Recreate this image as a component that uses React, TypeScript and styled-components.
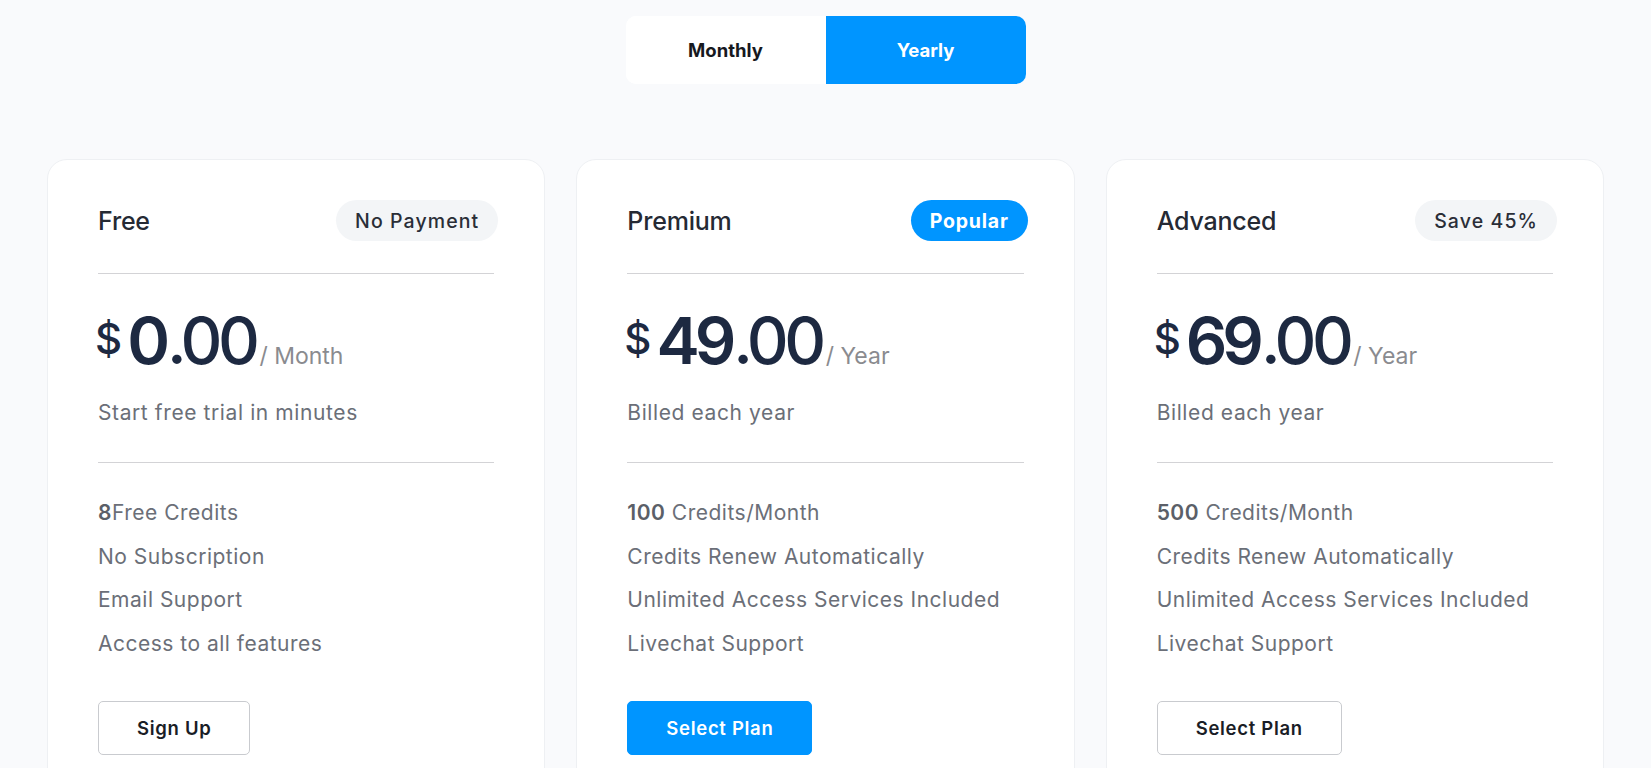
import * as React from 'react'
import styled, { createGlobalStyle } from 'styled-components'

const GlobalStyle = createGlobalStyle`
	html, body {
		margin: 0;
		padding: 0;
		background: #f9fafc;
		font-family: Inter, "Noto Sans", "Liberation Sans", sans-serif;
		-webkit-font-smoothing: antialiased;
	}
	* {
		box-sizing: border-box;
	}
`

type Plan = {
	name: string
	badge: string
	badgeActive?: boolean
	whole: string
	cents: string
	period: string
	note: string
	features: { strong?: string; text: string }[]
	action: string
	primary?: boolean
}

const plans: Plan[] = [
	{
		name: 'Free',
		badge: 'No Payment',
		whole: '0',
		cents: '.00',
		period: '/ Month',
		note: 'Start free trial in minutes',
		features: [
			{ strong: '8', text: 'Free Credits' },
			{ text: 'No Subscription' },
			{ text: 'Email Support' },
			{ text: 'Access to all features' },
		],
		action: 'Sign Up',
	},
	{
		name: 'Premium',
		badge: 'Popular',
		badgeActive: true,
		whole: '49',
		cents: '.00',
		period: '/ Year',
		note: 'Billed each year',
		features: [
			{ strong: '100', text: ' Credits/Month' },
			{ text: 'Credits Renew Automatically' },
			{ text: 'Unlimited Access Services Included' },
			{ text: 'Livechat Support' },
		],
		action: 'Select Plan',
		primary: true,
	},
	{
		name: 'Advanced',
		badge: 'Save 45%',
		whole: '69',
		cents: '.00',
		period: '/ Year',
		note: 'Billed each year',
		features: [
			{ strong: '500', text: ' Credits/Month' },
			{ text: 'Credits Renew Automatically' },
			{ text: 'Unlimited Access Services Included' },
			{ text: 'Livechat Support' },
		],
		action: 'Select Plan',
	},
]

export default function App() {
	const [yearly, setYearly] = React.useState(true)

	return (
		<Page>
			<GlobalStyle />
			<Toggle>
				<ToggleButton active={!yearly} onClick={() => setYearly(false)}>
					Monthly
				</ToggleButton>
				<ToggleButton active={yearly} onClick={() => setYearly(true)}>
					Yearly
				</ToggleButton>
			</Toggle>
			<Cards>
				{plans.map(plan => (
					<Card key={plan.name}>
						<CardHead>
							<PlanName>{plan.name}</PlanName>
							<Badge active={plan.badgeActive}>{plan.badge}</Badge>
						</CardHead>
						<Rule />
						<PriceRow>
							<Currency>$</Currency>
							<Whole>{plan.whole}</Whole>
							<Cents>{plan.cents}</Cents>
							<Period>{plan.period}</Period>
						</PriceRow>
						<Note>{plan.note}</Note>
						<Rule />
						<Features>
							{plan.features.map((f, i) => (
								<Feature key={i}>
									{f.strong && <b>{f.strong}</b>}
									{f.text}
								</Feature>
							))}
						</Features>
						<Action primary={plan.primary}>{plan.action}</Action>
					</Card>
				))}
			</Cards>
		</Page>
	)
}

const Page = styled.div`
	padding: 16px 47px 0;
	display: flex;
	flex-direction: column;
	align-items: center;
	min-height: 768px;
	overflow: hidden;
`

const Toggle = styled.div`
	display: flex;
	width: 400px;
	height: 68px;
	border-radius: 10px;
	background: #fff;
	overflow: hidden;
`

const ToggleButton = styled.button<{ active?: boolean }>`
	flex: 1;
	border: 0;
	margin: 0;
	font-family: inherit;
	font-size: 18.5px;
	font-weight: 700;
	letter-spacing: 0;
	cursor: pointer;
	background: ${p => (p.active ? '#0095ff' : '#fff')};
	color: ${p => (p.active ? '#fff' : '#16181e')};
`

const Cards = styled.div`
	margin-top: 75px;
	width: 100%;
	display: grid;
	grid-template-columns: repeat(3, 1fr);
	gap: 31px;
`

const Card = styled.div`
	background: #fff;
	border: 1px solid #eef0f3;
	border-radius: 20px;
	padding: 40px 46px 60px 50px;
	display: flex;
	flex-direction: column;
	align-items: flex-start;
`

const CardHead = styled.div`
	width: 100%;
	height: 41px;
	display: flex;
	align-items: center;
	justify-content: space-between;
`

const PlanName = styled.span`
	font-size: 25px;
	font-weight: 500;
	color: #252a34;
	letter-spacing: -0.2px;
`

const Badge = styled.span<{ active?: boolean }>`
	height: 41px;
	display: inline-flex;
	align-items: center;
	padding: 0 19px;
	border-radius: 21px;
	font-size: 19.5px;
	font-weight: ${p => (p.active ? 700 : 500)};
	letter-spacing: ${p => (p.active ? '0.8px' : '1.1px')};
	background: ${p => (p.active ? '#0095ff' : '#f3f5f7')};
	color: ${p => (p.active ? '#fff' : '#2a2e37')};
`

const Rule = styled.hr`
	align-self: stretch;
	margin: 32px 4px 0 0;
	border: 0;
	border-top: 1px solid #d3d3d6;
	& ~ & {
		margin-top: 34px;
	}
`

const PriceRow = styled.div`
	margin-top: 34px;
	display: flex;
	align-items: baseline;
	line-height: 1;
	color: #1d2941;
`

const Currency = styled.span`
	align-self: flex-start;
	margin: 10px 5px 0 -3px;
	font-size: 42px;
	font-weight: 500;
`

const Whole = styled.span`
	font-size: 65px;
	font-weight: 600;
	letter-spacing: -5px;
	margin-right: 2px;
`

const Cents = styled.span`
	font-size: 65px;
	font-weight: 500;
	letter-spacing: -4.5px;
`

const Period = styled.span`
	margin-left: 4px;
	font-size: 23px;
	font-weight: 400;
	color: #8a8b8f;
`

const Note = styled.p`
	margin: 25px 0 0;
	font-size: 21px;
	letter-spacing: 0.6px;
	line-height: 30px;
	color: #6b6f78;
`

const Features = styled.ul`
	list-style: none;
	margin: 28px 0 0;
	padding: 0;
`

const Feature = styled.li`
	font-size: 21px;
	letter-spacing: 0.5px;
	line-height: 43.5px;
	color: #6b6f78;
	white-space: nowrap;

	b {
		font-weight: 600;
		color: #5b5f68;
	}
`

const Action = styled.button<{ primary?: boolean }>`
	margin-top: 36px;
	height: 54px;
	padding: 0 38px;
	border-radius: 5px;
	font-family: inherit;
	font-size: 18.5px;
	letter-spacing: 0.7px;
	font-weight: 600;
	cursor: pointer;
	border: 1px solid ${p => (p.primary ? '#0095ff' : '#c9cbcf')};
	background: ${p => (p.primary ? '#0095ff' : '#fff')};
	color: ${p => (p.primary ? '#fff' : '#1a1d26')};
`
